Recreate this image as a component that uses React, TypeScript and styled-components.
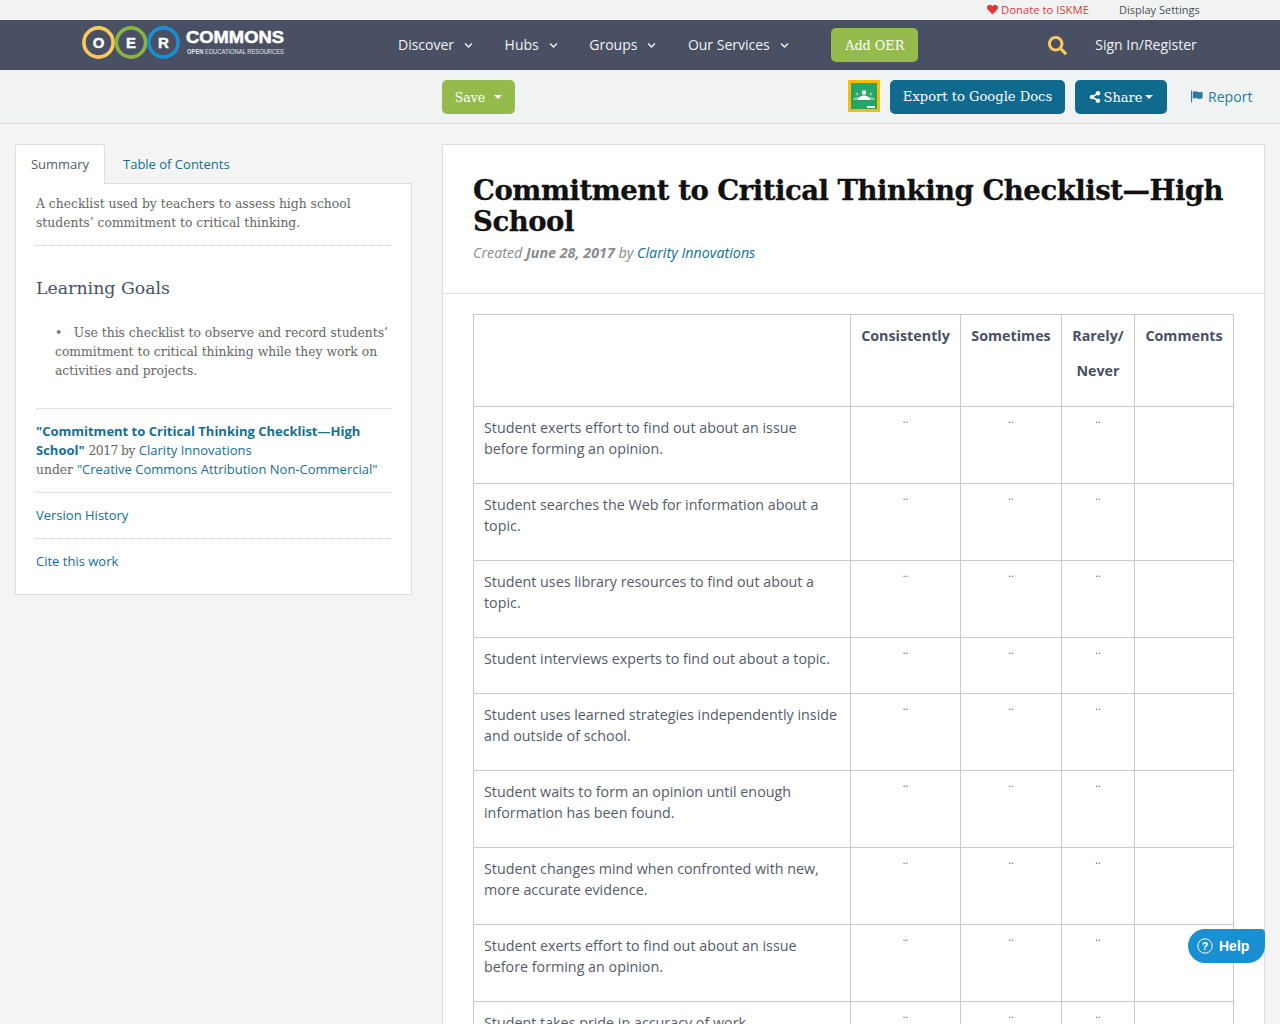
import React from "react";
import styled, { createGlobalStyle } from "styled-components";
import { FaHeart, FaSearch, FaShareAlt, FaChevronDown } from "react-icons/fa";

const sans = `"Open Sans", "Noto Sans", sans-serif`;
const slab = `"DejaVu Serif", "Liberation Serif", serif`;

const Global = createGlobalStyle`
  html, body { margin: 0; padding: 0; height: 1024px; overflow: hidden; background: #f4f4f4; }
  body { font-family: ${sans}; font-size: 14px; color: #4a5063; }
  * { box-sizing: border-box; }
  a { color: #136f94; text-decoration: none; }
`;

const TopBar = styled.div`
  height: 20px; background: #f1f3f2; display: flex; align-items: center;
  padding: 0 0 2px 987px; font-size: 11px; color: #4a4f5c;
`;
const Donate = styled.a`
  && { color: #dc3a40; } display: flex; align-items: center; gap: 3px; width: 132px; font-size: 11.300px;
`;
const Nav = styled.nav`
  height: 50px; background: #4a5063; display: flex; align-items: center; padding-left: 82px; color: #fff;
`;
const LogoBox = styled.div`width: 203px; height: 36px; margin: 0 113px 2px 0; flex: none;`;
const Menu = styled.div`display: flex; gap: 31.500px; align-items: center;`;
const MenuItem = styled.div`
  display: flex; align-items: center; gap: 10px; color: #f1f2f4;
  span { margin-bottom: 2px; }
`;
const AddBtn = styled.div`
  margin-left: 42.500px; width: 87px; height: 34px; border-radius: 5px; background: #95bb4d; color: #fff;
  font: 12.800px ${slab}; display: flex; align-items: center; justify-content: center;
`;
const SearchWrap = styled.div`margin-left: 130px; width: 47px; color: #f9c95d; display: flex;`;
const SignIn = styled.div`color: #f1f2f4; margin-bottom: 2px;`;

const Toolbar = styled.div`
  height: 54px; background: #f1f3f2; border-bottom: 1px solid #d9d9d9;
  display: flex; align-items: flex-start; padding: 10px 0 0 442px;
`;
const Btn = styled.div<{ $bg: string; $w: number; $ml: number; $fs: number; $pb?: number }>`
  width: ${p => p.$w}px; height: 34px; margin-left: ${p => p.$ml}px; border-radius: 5px; background: ${p => p.$bg};
  padding-bottom: ${p => p.$pb ?? 0}px;
  color: #fff; font: ${p => p.$fs}px ${slab}; display: flex; align-items: center; justify-content: center; gap: 3px; flex: none;
`;
const Caret = styled.span<{ $ml?: number }>`
  width: 0; height: 0; border: 4px solid transparent; border-top-color: #fff; border-bottom: 0;
  margin-left: ${p => p.$ml ?? 0}px;
`;
const ClassBox = styled.div`margin-left: 333px; width: 32px; height: 32px; flex: none;`;
const ReportLink = styled.a`
  margin-left: 24px; height: 32px; font-size: 14.100px; display: flex; align-items: center; gap: 4px; color: #2a7a9c;
`;

const Page = styled.div`display: flex; align-items: flex-start; padding: 20px 15px 0; gap: 30px;`;
const Side = styled.aside`width: 397px; flex: none;`;
const Tabs = styled.div`display: flex; height: 40px; position: relative; z-index: 1;`;
const Tab = styled.div<{ $active?: boolean }>`
  height: 40px; font-size: 13px; display: flex; align-items: center; justify-content: center;
  width: ${p => (p.$active ? "90px" : "auto")}; padding: ${p => (p.$active ? "0 0 1px" : "0 0 0 18px")};
  color: ${p => (p.$active ? "#555b69" : "#136f94")}; background: ${p => (p.$active ? "#fff" : "transparent")};
  border: ${p => (p.$active ? "1px solid #ddd" : "0")}; border-bottom: 0; border-radius: 3px 3px 0 0;
`;
const Panel = styled.div`
  margin-top: -1px; background: #fff; border: 1px solid #ddd; padding: 11px 20px 23px; height: 412px;
`;
const SideText = styled.p`
  margin: 0; font: 12.350px/19px ${slab}; color: #666;
`;
const Dotted = styled.div`
  border-bottom: 1px dotted #c4c4c4; padding-bottom: 12px;
`;
const GoalHead = styled.h3`
  margin: 29px 0 0; font: 400 17.350px/26px ${slab}; color: #4a5063;
`;
const GoalList = styled.div`
  margin-top: 23px; padding: 0 0 27px 19px; border-bottom: 1px dotted #c4c4c4;
  font: 12.350px/19px ${slab}; color: #666;
`;
const Bullet = styled.span`margin-right: 11.500px; &::before { content: "•"; color: #777; }`;
const Credit = styled.div`
  padding: 14px 0 12px; border-bottom: 1px dotted #c4c4c4; font: 12.350px/19px ${slab}; color: #666;
`;
const CreditYear = styled.span`letter-spacing: -0.550px;`;
const SansLink = styled.a<{ $bold?: boolean }>`
  font-family: ${sans}; font-size: 13px; line-height: 1; font-weight: ${p => (p.$bold ? 700 : 400)};
`;
const SideRow = styled.div<{ $last?: boolean }>`
  height: 46px; padding-top: 13px; font-size: 13px; line-height: 19px;
  border-bottom: ${p => (p.$last ? "0" : "1px dotted #c4c4c4")};
`;

const Main = styled.main`
  width: 823px; flex: none; background: #fff; border: 1px solid #ddd; height: 1100px;
`;
const Head = styled.header`
  height: 149px; padding: 30px 30px 0; border-bottom: 1px solid #ddd;
`;
const Title = styled.h1`
  margin: 0; font: 900 27.500px/31px ${slab}; color: #111; letter-spacing: -0.480px; -webkit-text-stroke: 0.3px #111;
`;
const Meta = styled.div`
  margin-top: 6px; font-size: 14.300px; line-height: 19px; font-style: italic; color: #8b8b8b;
  a { font-style: italic; }
`;
const TableWrap = styled.div`padding: 20px 30px 0;`;
const Table = styled.table`
  width: 760px; table-layout: fixed; border-collapse: collapse; font-size: 14.300px; line-height: 21px;
  th, td { border: 1px solid #c9c9c9; vertical-align: top; }
`;
const Th = styled.th`
  padding: 3px 4px 18px; font-size: 14.300px; line-height: 35px; font-weight: 700; color: #4a5063; text-align: center;
`;
const RowLabel = styled.td`padding: 10px 10px 24px; color: #555b69;`;
const Mark = styled.td`
  padding: 6px 0 0; text-align: center; font-size: 10px; line-height: 12px; color: #555;
`;
const Help = styled.div`
  position: fixed; left: 1188px; top: 929px; width: 77px; height: 34px; background: #1a8fd1; color: #fff;
  border-radius: 17px 4px 17px 17px; display: flex; align-items: center; gap: 6px; padding-left: 9px;
  font: 700 14px "Liberation Sans", sans-serif;
`;

const Logo = () => (
  <svg width="203" height="36" viewBox="0 0 203 36" aria-label="OER Commons">
    {[
      ["O", 16.5, "#f9c95d"],
      ["E", 49, "#8ab440"],
      ["R", 81.5, "#1a8fd1"],
    ].map(([l, x, c]) => (
      <g key={l as string}>
        <circle cx={x as number} cy="16.5" r="14.6" fill="none" stroke={c as string} strokeWidth="3.600" />
        <text x={x as number} y="21.700" textAnchor="middle" fill="#fff" stroke="#fff" strokeWidth="0.4" fontFamily="Liberation Sans" fontWeight="700" fontSize="15">{l as string}</text>
      </g>
    ))}
    <text x="104" y="17" textLength="98" lengthAdjust="spacingAndGlyphs" fill="#fff" fontFamily="Liberation Sans" fontWeight="700" stroke="#fff" strokeWidth="0.5" fontSize="16.500">COMMONS</text>
    <text x="105" y="27.500" textLength="97" lengthAdjust="spacingAndGlyphs" fill="#e4e5e8" fontFamily="Liberation Sans" fontSize="6.500"><tspan fontWeight="700">OPEN</tspan> EDUCATIONAL RESOURCES</text>
  </svg>
);

const ClassIcon = () => (
  <svg width="32" height="32" viewBox="0 0 32 32">
    <rect width="32" height="32" fill="#fbbc04" />
    <rect x="3" y="3" width="26" height="26" fill="#25a667" />
    <circle cx="9" cy="14" r="1.600" fill="#7fcba5" />
    <circle cx="23" cy="14" r="1.600" fill="#7fcba5" />
    <path d="M5 20c0-2 2-3 4-3s3 1 3 3zM20 20c0-2 1-3 3-3s4 1 4 3z" fill="#7fcba5" />
    <circle cx="16" cy="12.500" r="2.200" fill="#fff" />
    <path d="M10 20c0-3 3-4.500 6-4.500s6 1.500 6 4.500z" fill="#fff" />
    <rect x="19" y="26" width="8" height="2" fill="#eef5f0" />
  </svg>
);

const FlagIcon = () => (
  <svg width="13" height="13" viewBox="0 0 14 13" fill="currentColor">
    <rect x="0" y="0" width="1.200" height="13" />
    <path d="M2 1.500c2-1.200 3.500-.7 5 0s3 .7 5.500-.5v7.200c-2.500 1.300-4 1.200-5.500.5s-3-1-5 .1z" />
  </svg>
);

const rows: string[] = [
  "Student exerts effort to find out about an issue before forming an opinion.",
  "Student searches the Web for information about a topic.",
  "Student uses library resources to find out about a topic.",
  "Student interviews experts to find out about a topic.",
  "Student uses learned strategies independently inside and outside of school.",
  "Student waits to form an opinion until enough information has been found.",
  "Student changes mind when confronted with new, more accurate evidence.",
  "Student exerts effort to find out about an issue before forming an opinion.",
  "Student takes pride in accuracy of work.",
];

const menu = ["Discover", "Hubs", "Groups", "Our Services"];

export default function App() {
  return (
    <>
      <Global />
      <TopBar>
        <Donate href="#"><FaHeart size={11} />Donate to ISKME</Donate>
        <span>Display Settings</span>
      </TopBar>
      <Nav>
        <LogoBox><Logo /></LogoBox>
        <Menu>
          {menu.map(m => (
            <MenuItem key={m}><span>{m}</span><FaChevronDown size={9} /></MenuItem>
          ))}
        </Menu>
        <AddBtn>Add OER</AddBtn>
        <SearchWrap><FaSearch size={19} /></SearchWrap>
        <SignIn>Sign In/Register</SignIn>
      </Nav>
      <Toolbar>
        <Btn $bg="#95bb4d" $w={73} $ml={0} $fs={12.5}>Save<Caret $ml={6} /></Btn>
        <ClassBox><ClassIcon /></ClassBox>
        <Btn $bg="#0f6a8e" $w={175} $ml={10} $fs={13.1} $pb={2}>Export to Google Docs</Btn>
        <Btn $bg="#0f6a8e" $w={92} $ml={10} $fs={13}><FaShareAlt size={12} />Share<Caret /></Btn>
        <ReportLink href="#"><FlagIcon />Report</ReportLink>
      </Toolbar>
      <Page>
        <Side>
          <Tabs>
            <Tab $active>Summary</Tab>
            <Tab>Table of Contents</Tab>
          </Tabs>
          <Panel>
            <Dotted>
              <SideText>A checklist used by teachers to assess high school students’ commitment to critical thinking.</SideText>
            </Dotted>
            <GoalHead>Learning Goals</GoalHead>
            <GoalList>
              <Bullet />Use this checklist to observe and record students’ commitment to critical thinking while they work on activities and projects.
            </GoalList>
            <Credit>
              <SansLink href="#" $bold>"Commitment to Critical Thinking Checklist—High School"</SansLink> <CreditYear>2017 by</CreditYear> <SansLink href="#">Clarity Innovations</SansLink>
              <br />under <SansLink href="#">"Creative Commons Attribution Non-Commercial"</SansLink>
            </Credit>
            <SideRow><a href="#">Version History</a></SideRow>
            <SideRow $last><a href="#">Cite this work</a></SideRow>
          </Panel>
        </Side>
        <Main>
          <Head>
            <Title>Commitment to Critical Thinking Checklist—High School</Title>
            <Meta>Created <b>June 28, 2017</b> by <a href="#">Clarity Innovations</a></Meta>
          </Head>
          <TableWrap>
            <Table>
              <colgroup>
                <col style={{ width: 377 }} />
                <col style={{ width: 110 }} />
                <col style={{ width: 101 }} />
                <col style={{ width: 73 }} />
                <col style={{ width: 99 }} />
              </colgroup>
              <thead>
                <tr>
                  <Th />
                  <Th>Consistently</Th>
                  <Th>Sometimes</Th>
                  <Th>Rarely/<br />Never</Th>
                  <Th>Comments</Th>
                </tr>
              </thead>
              <tbody>
                {rows.map((r, i) => (
                  <tr key={i}>
                    <RowLabel>{r}</RowLabel>
                    <Mark>..</Mark>
                    <Mark>..</Mark>
                    <Mark>..</Mark>
                    <Mark />
                  </tr>
                ))}
              </tbody>
            </Table>
          </TableWrap>
        </Main>
      </Page>
      <Help>
        <svg width="16" height="16" viewBox="0 0 16 16" fill="none" stroke="#fff">
          <circle cx="8" cy="8" r="7.200" strokeWidth="1" />
          <text x="8" y="11.700" textAnchor="middle" fill="#fff" stroke="none" fontSize="10.500" fontFamily="Liberation Sans">?</text>
        </svg>
        Help
      </Help>
    </>
  );
}
